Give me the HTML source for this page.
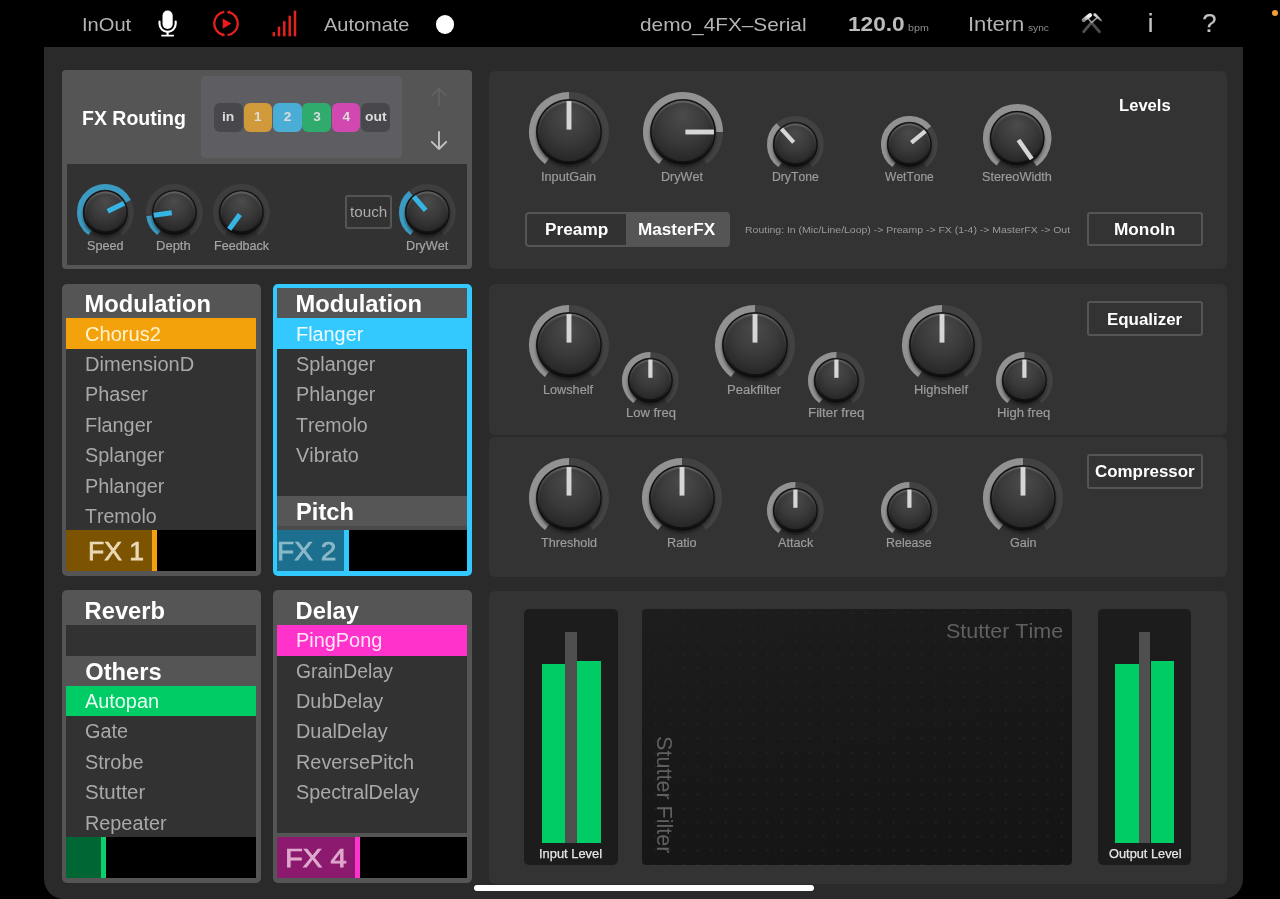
<!DOCTYPE html><html lang="en"><head><meta charset="utf-8"><title>4FX Serial</title><style>
*{margin:0;padding:0;box-sizing:border-box}
html,body{width:1280px;height:899px;overflow:hidden;background:#000}
body{position:relative;font-family:"Liberation Sans",sans-serif;font-kerning:none;-webkit-font-smoothing:antialiased}
.t{position:absolute;white-space:nowrap}
#w{position:absolute;left:0;top:0;width:1280px;height:899px;will-change:transform}
.b{position:absolute}
.k{position:absolute;overflow:visible}
svg{display:block}
</style></head><body>
<svg width="0" height="0" style="position:absolute"><defs>
<linearGradient id="kg1" x1="0" y1="0" x2="0" y2="1"><stop offset="0" stop-color="#606060"/><stop offset="0.2" stop-color="#484848"/><stop offset="0.65" stop-color="#262626"/><stop offset="1" stop-color="#0e0e0e"/></linearGradient>
<radialGradient id="kg2" cx="0.5" cy="0.36" r="0.68" fx="0.5" fy="0.2"><stop offset="0" stop-color="#4b4b4b"/><stop offset="0.55" stop-color="#3a3a3a"/><stop offset="0.85" stop-color="#2c2c2c"/><stop offset="1" stop-color="#232323"/></radialGradient>
<filter id="ks" x="-30%" y="-30%" width="160%" height="160%"><feGaussianBlur stdDeviation="1.6"/></filter>
</defs></svg>
<div id="w">
<div class="b" style="left:44px;top:47px;width:1199.00px;height:852.00px;background:#2a2a2a;border-radius:0 0 20px 20px"></div>
<div class="t" style="left:82.34px;top:14px;font-size:19px;line-height:21px;color:#b4b4b4;font-weight:400;transform-origin:0 0;transform:scaleX(1.0588);">InOut</div>
<div class="t" style="left:324.16px;top:14px;font-size:19px;line-height:21px;color:#b4b4b4;font-weight:400;transform-origin:0 0;transform:scaleX(1.0504);">Automate</div>
<div class="t" style="left:640.13px;top:14px;font-size:19px;line-height:21px;color:#b4b4b4;font-weight:400;transform-origin:0 0;transform:scaleX(1.0952);">demo_4FX–Serial</div>
<div class="t" style="left:848.17px;top:13px;font-size:20.3px;line-height:22px;color:#bcbcbc;font-weight:700;transform-origin:0 0;transform:scaleX(1.1173);">120.0</div>
<div class="t" style="left:908.11px;top:22px;font-size:9.6px;line-height:11px;color:#8e8e8e;font-weight:400;transform-origin:0 0;transform:scaleX(1.1134);">bpm</div>
<div class="t" style="left:968.27px;top:13px;font-size:20px;line-height:22px;color:#b4b4b4;font-weight:400;transform-origin:0 0;transform:scaleX(1.1021);">Intern</div>
<div class="t" style="left:1027.92px;top:22px;font-size:9.6px;line-height:11px;color:#8e8e8e;font-weight:400;transform-origin:0 0;transform:scaleX(1.0615);">sync</div>
<div class="t" style="left:1147.69px;top:9px;font-size:25.6px;line-height:28px;letter-spacing:0.000px;color:#c2c2c2;font-weight:400;-webkit-text-stroke:0.2px #c2c2c2;">i</div>
<div class="t" style="left:1202.15px;top:9px;font-size:25.6px;line-height:28px;letter-spacing:0.000px;color:#c2c2c2;font-weight:400;-webkit-text-stroke:0.2px #c2c2c2;">?</div>
<svg class="b" style="left:154px;top:8px" width="28" height="32" viewBox="0 0 28 32">
<rect x="8.5" y="2.6" width="10.2" height="18.4" rx="5.1" fill="#fff"/>
<path d="M5.5 13.6v2.2a8.1 8.1 0 0 0 16.2 0v-2.2" fill="none" stroke="#fff" stroke-width="2.1" stroke-linecap="round"/>
<path d="M13.6 23.8v3.6" stroke="#fff" stroke-width="2.1"/>
<path d="M7.9 27.65h11.4" stroke="#fff" stroke-width="1.6" stroke-linecap="round"/>
</svg>
<svg class="b" style="left:210px;top:8px" width="32" height="32" viewBox="0 0 32 32"><path d="M19.25 4.16A11.80 11.80 0 0 1 17.64 27.19" fill="none" stroke="#e5211d" stroke-width="2.3"/><path d="M12.75 26.84A11.80 11.80 0 0 1 14.36 3.81" fill="none" stroke="#e5211d" stroke-width="2.3"/><path d="M20.33 2.19L18.97 6.37L16.62 3.72z" fill="#e5211d"/><path d="M11.67 28.81L13.03 24.63L15.38 27.28z" fill="#e5211d"/><path d="M12.7 10.4v10.4l8.7-5.2z" fill="#f01a1a"/></svg>
<svg class="b" style="left:270px;top:8px" width="30" height="30" viewBox="0 0 30 30"><rect x="2.55" y="24.10" width="2.5" height="4.20" fill="#e5211d"/><rect x="7.75" y="18.60" width="2.5" height="9.70" fill="#e5211d"/><rect x="13.05" y="13.10" width="2.5" height="15.20" fill="#e5211d"/><rect x="18.45" y="7.70" width="2.5" height="20.60" fill="#e5211d"/><rect x="23.75" y="2.60" width="2.5" height="25.70" fill="#e5211d"/></svg>
<div class="b" style="left:435.8px;top:15.3px;width:18.6px;height:18.6px;border-radius:50%;background:#fff"></div>
<div class="b" style="left:1271.6px;top:9.7px;width:6.4px;height:6.4px;border-radius:50%;background:#f0a030"></div>
<svg class="b" style="left:1076px;top:8px" width="32" height="30" viewBox="0 0 32 30">
<defs><linearGradient id="hh" x1="0" y1="1" x2="1" y2="0"><stop offset="0" stop-color="#8a8a8a"/><stop offset="0.6" stop-color="#e9e9e9"/><stop offset="1" stop-color="#f4f4f4"/></linearGradient>
<linearGradient id="hh2" x1="0" y1="0" x2="1" y2="1"><stop offset="0" stop-color="#f0f0f0"/><stop offset="0.55" stop-color="#b8b8b8"/><stop offset="1" stop-color="#555"/></linearGradient></defs>
<path d="M15.6 14.8L23.5 23.7" stroke="#4b4b4b" stroke-width="2.8" stroke-linecap="round"/>
<path d="M15.2 14.8L7.7 23.7" stroke="#525252" stroke-width="2.8" stroke-linecap="round"/>
<path d="M10.7 8.7L15.6 14.6" stroke="#9c9c9c" stroke-width="1.6"/>
<path d="M21.2 9.5L15.3 14.8" stroke="#a4a4a4" stroke-width="1.6"/>
<path d="M7.7 12L14.1 7.2" stroke="url(#hh)" stroke-width="4" stroke-linecap="round"/>
<path d="M17.3 5.7l2.2-0.5 6 6.2 0.9 2.3-2.1-0.8-6.6-5.4z" fill="url(#hh2)"/>
</svg>
<div class="b" style="left:474px;top:884.6px;width:340.00px;height:6.00px;background:#fff;border-radius:3px"></div>
<div class="b" style="left:62px;top:70px;width:409.50px;height:199.30px;background:#555555;border-radius:4px"></div>
<div class="b" style="left:66.7px;top:164px;width:400.30px;height:100.50px;background:#323232;"></div>
<div class="b" style="left:201.4px;top:76px;width:201.00px;height:82.00px;background:#5e5e62;border-radius:4px"></div>
<div class="t" style="left:81.60px;top:107px;font-size:19.8px;line-height:22px;color:#ffffff;font-weight:700;transform-origin:0 0;transform:scaleX(0.9852);">FX Routing</div>
<div class="b" style="left:214.2px;top:102.6px;width:28.50px;height:29.20px;background:#47474c;border-radius:6px"></div>
<div class="t" style="left:222.36px;top:109px;font-size:13.6px;line-height:15px;color:#dcdcdc;font-weight:700;transform-origin:0 0;transform:scaleX(1.0243);">in</div>
<div class="b" style="left:243.62px;top:102.6px;width:28.50px;height:29.20px;background:#d09a3a;border-radius:6px"></div>
<div class="t" style="left:254.00px;top:109px;font-size:13.6px;line-height:15px;letter-spacing:0.000px;color:#dcdcdc;font-weight:700;">1</div>
<div class="b" style="left:273.04px;top:102.6px;width:28.50px;height:29.20px;background:#4aadd6;border-radius:6px"></div>
<div class="t" style="left:283.69px;top:109px;font-size:13.6px;line-height:15px;letter-spacing:0.000px;color:#dcdcdc;font-weight:700;">2</div>
<div class="b" style="left:302.46px;top:102.6px;width:28.50px;height:29.20px;background:#2fab6e;border-radius:6px"></div>
<div class="t" style="left:313.17px;top:109px;font-size:13.6px;line-height:15px;letter-spacing:0.000px;color:#dcdcdc;font-weight:700;">3</div>
<div class="b" style="left:331.88px;top:102.6px;width:28.50px;height:29.20px;background:#d048b0;border-radius:6px"></div>
<div class="t" style="left:342.43px;top:109px;font-size:13.6px;line-height:15px;letter-spacing:0.000px;color:#dcdcdc;font-weight:700;">4</div>
<div class="b" style="left:361.3px;top:102.6px;width:28.50px;height:29.20px;background:#47474c;border-radius:6px"></div>
<div class="t" style="left:364.68px;top:109px;font-size:13.6px;line-height:15px;color:#dcdcdc;font-weight:700;transform-origin:0 0;transform:scaleX(1.0245);">out</div>
<svg class="b" style="left:428px;top:84px" width="22" height="70" viewBox="0 0 22 70">
<g fill="none" stroke="#646464" stroke-width="1.7" stroke-linecap="round" stroke-linejoin="round"><path d="M11 21.5V4.5M4 11.5l7-7 7 7"/></g>
<g fill="none" stroke="#c2c2c2" stroke-width="1.9" stroke-linecap="round" stroke-linejoin="round"><path d="M11 48V65M3.8 57.8l7.2 7.2 7.2-7.2"/></g>
</svg>
<svg class="k" style="left:73.40px;top:179.90px" width="64.80" height="64.80" viewBox="0 0 64.80 64.80"><path d="M17.05 52.77A25.50 25.50 0 1 1 47.75 52.77" fill="none" stroke="#3e3e3e" stroke-width="5.8"/><path d="M17.05 52.77A25.50 25.50 0 1 1 55.32 21.22" fill="none" stroke="#3c9bc2" stroke-width="5.8"/><ellipse cx="32.4" cy="34.90" rx="22.00" ry="22.30" fill="#151515" opacity="0.85" filter="url(#ks)"/><circle cx="32.4" cy="32.4" r="22.20" fill="#0d0d0d"/><circle cx="32.4" cy="32.4" r="21.10" fill="url(#kg1)"/><circle cx="32.4" cy="32.4" r="18.90" fill="url(#kg2)"/><rect x="29.85" y="11.60" width="5.1000000000000005" height="18.20" fill="#36b4e4" transform="rotate(64 32.4 32.4)"/></svg>
<div class="t" style="left:87.44px;top:239px;font-size:12px;line-height:14px;color:#a6a6a6;font-weight:400;transform-origin:0 0;transform:scaleX(1.0539);-webkit-text-stroke:0.18px #a6a6a6;">Speed</div>
<svg class="k" style="left:141.50px;top:179.90px" width="64.80" height="64.80" viewBox="0 0 64.80 64.80"><path d="M17.05 52.77A25.50 25.50 0 1 1 47.75 52.77" fill="none" stroke="#3e3e3e" stroke-width="5.8"/><path d="M17.05 52.77A25.50 25.50 0 0 1 7.15 35.95" fill="none" stroke="#3c9bc2" stroke-width="5.8"/><ellipse cx="32.4" cy="34.90" rx="22.00" ry="22.30" fill="#151515" opacity="0.85" filter="url(#ks)"/><circle cx="32.4" cy="32.4" r="22.20" fill="#0d0d0d"/><circle cx="32.4" cy="32.4" r="21.10" fill="url(#kg1)"/><circle cx="32.4" cy="32.4" r="18.90" fill="url(#kg2)"/><rect x="29.85" y="11.60" width="5.1000000000000005" height="18.20" fill="#36b4e4" transform="rotate(-98 32.4 32.4)"/></svg>
<div class="t" style="left:156.13px;top:239px;font-size:12px;line-height:14px;color:#a6a6a6;font-weight:400;transform-origin:0 0;transform:scaleX(1.0840);-webkit-text-stroke:0.18px #a6a6a6;">Depth</div>
<svg class="k" style="left:209.10px;top:179.90px" width="64.80" height="64.80" viewBox="0 0 64.80 64.80"><path d="M17.05 52.77A25.50 25.50 0 1 1 47.75 52.77" fill="none" stroke="#3e3e3e" stroke-width="5.8"/><ellipse cx="32.4" cy="34.90" rx="22.00" ry="22.30" fill="#151515" opacity="0.85" filter="url(#ks)"/><circle cx="32.4" cy="32.4" r="22.20" fill="#0d0d0d"/><circle cx="32.4" cy="32.4" r="21.10" fill="url(#kg1)"/><circle cx="32.4" cy="32.4" r="18.90" fill="url(#kg2)"/><rect x="29.85" y="11.60" width="5.1000000000000005" height="18.20" fill="#36b4e4" transform="rotate(-144 32.4 32.4)"/></svg>
<div class="t" style="left:213.51px;top:239px;font-size:12px;line-height:14px;color:#a6a6a6;font-weight:400;transform-origin:0 0;transform:scaleX(1.0460);-webkit-text-stroke:0.18px #a6a6a6;">Feedback</div>
<svg class="k" style="left:395.00px;top:179.90px" width="64.80" height="64.80" viewBox="0 0 64.80 64.80"><path d="M17.05 52.77A25.50 25.50 0 1 1 47.75 52.77" fill="none" stroke="#3e3e3e" stroke-width="5.8"/><path d="M17.05 52.77A25.50 25.50 0 0 1 15.67 13.15" fill="none" stroke="#3c9bc2" stroke-width="5.8"/><ellipse cx="32.4" cy="34.90" rx="22.00" ry="22.30" fill="#151515" opacity="0.85" filter="url(#ks)"/><circle cx="32.4" cy="32.4" r="22.20" fill="#0d0d0d"/><circle cx="32.4" cy="32.4" r="21.10" fill="url(#kg1)"/><circle cx="32.4" cy="32.4" r="18.90" fill="url(#kg2)"/><rect x="29.85" y="11.60" width="5.1000000000000005" height="18.20" fill="#36b4e4" transform="rotate(-41 32.4 32.4)"/></svg>
<div class="t" style="left:405.82px;top:239px;font-size:12px;line-height:14px;color:#a6a6a6;font-weight:400;transform-origin:0 0;transform:scaleX(1.0552);-webkit-text-stroke:0.18px #a6a6a6;">DryWet</div>
<div class="b" style="left:345.4px;top:194.7px;width:46.6px;height:34.7px;border:2px solid #555;border-radius:3px"></div>
<div class="t" style="left:349.97px;top:203px;font-size:15px;line-height:17px;color:#ababab;font-weight:400;transform-origin:0 0;transform:scaleX(1.0171);">touch</div>
<div class="b" style="left:62px;top:283.6px;width:199.00px;height:292.20px;background:#555555;border-radius:5px"></div>
<div class="b" style="left:66.3px;top:288.1px;width:189.90px;height:242.30px;background:#323232;"></div>
<div class="b" style="left:66.3px;top:288.1px;width:189.90px;height:30.35px;background:#555555;"></div>
<div class="t" style="left:84.61px;top:291px;font-size:23.7px;line-height:26px;color:#ffffff;font-weight:700;transform-origin:0 0;transform:scaleX(1.0000);">Modulation</div>
<div class="b" style="left:66.3px;top:318.45000000000005px;width:189.90px;height:30.65px;background:#f4a20b;"></div>
<div class="t" style="left:84.97px;top:323px;font-size:19.5px;line-height:22px;color:#fff3cf;font-weight:400;transform-origin:0 0;transform:scaleX(1.0302);">Chorus2</div>
<div class="t" style="left:84.95px;top:353px;font-size:19.5px;line-height:22px;color:#a9a9a9;font-weight:400;transform-origin:0 0;transform:scaleX(1.0283);">DimensionD</div>
<div class="t" style="left:84.97px;top:383px;font-size:19.5px;line-height:22px;color:#a9a9a9;font-weight:400;transform-origin:0 0;transform:scaleX(1.0182);">Phaser</div>
<div class="t" style="left:84.97px;top:414px;font-size:19.5px;line-height:22px;color:#a9a9a9;font-weight:400;transform-origin:0 0;transform:scaleX(1.0182);">Flanger</div>
<div class="t" style="left:84.98px;top:444px;font-size:19.5px;line-height:22px;color:#a9a9a9;font-weight:400;transform-origin:0 0;transform:scaleX(1.0182);">Splanger</div>
<div class="t" style="left:84.98px;top:475px;font-size:19.5px;line-height:22px;color:#a9a9a9;font-weight:400;transform-origin:0 0;transform:scaleX(1.0153);">Phlanger</div>
<div class="t" style="left:85.00px;top:505px;font-size:19.5px;line-height:22px;color:#a9a9a9;font-weight:400;transform-origin:0 0;transform:scaleX(1.0020);">Tremolo</div>
<div class="b" style="left:66.3px;top:530.4px;width:189.90px;height:40.70px;background:#000;"></div>
<div class="b" style="left:66.3px;top:530.4px;width:85.80px;height:40.70px;background:#7b5301;"></div>
<div class="b" style="left:152.1px;top:530.4px;width:4.80px;height:40.70px;background:#f4a20b;"></div>
<div class="t" style="left:87.82px;top:536px;font-size:26.6px;line-height:30px;color:#ead9b6;font-weight:400;transform-origin:0 0;transform:scaleX(0.9982);-webkit-text-stroke:0.75px #ead9b6;">FX 1</div>
<div class="b" style="left:273px;top:283.6px;width:199.00px;height:292.30px;background:#33c9ff;border-radius:5px"></div>
<div class="b" style="left:277.4px;top:288.1px;width:189.70px;height:242.30px;background:#323232;"></div>
<div class="b" style="left:277.4px;top:288.1px;width:189.70px;height:30.35px;background:#555555;"></div>
<div class="t" style="left:295.61px;top:291px;font-size:23.7px;line-height:26px;color:#ffffff;font-weight:700;transform-origin:0 0;transform:scaleX(1.0000);">Modulation</div>
<div class="b" style="left:277.4px;top:318.45000000000005px;width:189.70px;height:30.65px;background:#33c9ff;"></div>
<div class="t" style="left:295.97px;top:323px;font-size:19.5px;line-height:22px;color:#eefaff;font-weight:400;transform-origin:0 0;transform:scaleX(1.0182);">Flanger</div>
<div class="t" style="left:295.98px;top:353px;font-size:19.5px;line-height:22px;color:#a9a9a9;font-weight:400;transform-origin:0 0;transform:scaleX(1.0182);">Splanger</div>
<div class="t" style="left:295.98px;top:383px;font-size:19.5px;line-height:22px;color:#a9a9a9;font-weight:400;transform-origin:0 0;transform:scaleX(1.0153);">Phlanger</div>
<div class="t" style="left:296.00px;top:414px;font-size:19.5px;line-height:22px;color:#a9a9a9;font-weight:400;transform-origin:0 0;transform:scaleX(1.0020);">Tremolo</div>
<div class="t" style="left:296.00px;top:444px;font-size:19.5px;line-height:22px;color:#a9a9a9;font-weight:400;transform-origin:0 0;transform:scaleX(1.0182);">Vibrato</div>
<div class="b" style="left:277.4px;top:530.4px;width:189.70px;height:40.70px;background:#000;"></div>
<div class="b" style="left:277.4px;top:530.4px;width:66.60px;height:40.70px;background:#1c6f8e;"></div>
<div class="b" style="left:344px;top:530.4px;width:5.20px;height:40.70px;background:#33c9ff;"></div>
<div class="b" style="left:277.4px;top:496.1px;width:189.70px;height:29.90px;background:#565656;"></div>
<div class="b" style="left:277.4px;top:526px;width:189.70px;height:4.40px;background:#4b4b4b;"></div>
<div class="t" style="left:296.01px;top:499px;font-size:23.7px;line-height:26px;color:#fff;font-weight:700;transform-origin:0 0;transform:scaleX(1.0000);">Pitch</div>
<div class="b" style="left:277.4px;top:530.4px;width:70px;height:40.7px;overflow:hidden"><div class="t" style="left:-0.41px;top:6px;font-size:26.6px;line-height:30px;color:#8bb9c9;font-weight:400;transform-origin:0 0;transform:scaleX(1.0578);-webkit-text-stroke:0.75px #8bb9c9;">FX 2</div></div>
<div class="b" style="left:62px;top:590.3px;width:199.00px;height:292.40px;background:#555555;border-radius:5px"></div>
<div class="b" style="left:66.3px;top:594.8px;width:189.90px;height:242.30px;background:#323232;"></div>
<div class="b" style="left:66.3px;top:594.8px;width:189.90px;height:30.35px;background:#555555;"></div>
<div class="t" style="left:84.61px;top:598px;font-size:23.7px;line-height:26px;color:#ffffff;font-weight:700;transform-origin:0 0;transform:scaleX(1.0000);">Reverb</div>
<div class="b" style="left:66.3px;top:655.5px;width:189.90px;height:30.35px;background:#555555;"></div>
<div class="t" style="left:85.23px;top:659px;font-size:23.7px;line-height:26px;color:#ffffff;font-weight:700;transform-origin:0 0;transform:scaleX(1.0000);">Others</div>
<div class="b" style="left:66.3px;top:685.8499999999999px;width:189.90px;height:30.65px;background:#00cc66;"></div>
<div class="t" style="left:85.00px;top:690px;font-size:19.5px;line-height:22px;color:#e6fff0;font-weight:400;transform-origin:0 0;transform:scaleX(1.0182);">Autopan</div>
<div class="t" style="left:84.98px;top:720px;font-size:19.5px;line-height:22px;color:#a9a9a9;font-weight:400;transform-origin:0 0;transform:scaleX(1.0182);">Gate</div>
<div class="t" style="left:84.98px;top:751px;font-size:19.5px;line-height:22px;color:#a9a9a9;font-weight:400;transform-origin:0 0;transform:scaleX(1.0182);">Strobe</div>
<div class="t" style="left:84.96px;top:781px;font-size:19.5px;line-height:22px;color:#a9a9a9;font-weight:400;transform-origin:0 0;transform:scaleX(1.0492);">Stutter</div>
<div class="t" style="left:84.97px;top:812px;font-size:19.5px;line-height:22px;color:#a9a9a9;font-weight:400;transform-origin:0 0;transform:scaleX(1.0167);">Repeater</div>
<div class="b" style="left:66.3px;top:837.1px;width:189.90px;height:40.70px;background:#000;"></div>
<div class="b" style="left:66.3px;top:837.1px;width:35.10px;height:40.70px;background:#006634;"></div>
<div class="b" style="left:101.4px;top:837.1px;width:4.80px;height:40.70px;background:#0dd06a;"></div>
<div class="b" style="left:273px;top:590.3px;width:199.00px;height:292.40px;background:#555555;border-radius:5px"></div>
<div class="b" style="left:277.2px;top:594.8px;width:189.90px;height:237.90px;background:#323232;"></div>
<div class="b" style="left:277.2px;top:594.8px;width:189.90px;height:30.35px;background:#555555;"></div>
<div class="t" style="left:295.61px;top:598px;font-size:23.7px;line-height:26px;color:#ffffff;font-weight:700;transform-origin:0 0;transform:scaleX(1.0000);">Delay</div>
<div class="b" style="left:277.2px;top:625.15px;width:189.90px;height:30.65px;background:#ff33cc;"></div>
<div class="t" style="left:295.97px;top:629px;font-size:19.5px;line-height:22px;color:#ffe6f8;font-weight:400;transform-origin:0 0;transform:scaleX(1.0206);">PingPong</div>
<div class="t" style="left:296.01px;top:660px;font-size:19.5px;line-height:22px;color:#a9a9a9;font-weight:400;transform-origin:0 0;transform:scaleX(0.9925);">GrainDelay</div>
<div class="t" style="left:295.97px;top:690px;font-size:19.5px;line-height:22px;color:#a9a9a9;font-weight:400;transform-origin:0 0;transform:scaleX(1.0182);">DubDelay</div>
<div class="t" style="left:295.97px;top:720px;font-size:19.5px;line-height:22px;color:#a9a9a9;font-weight:400;transform-origin:0 0;transform:scaleX(1.0182);">DualDelay</div>
<div class="t" style="left:295.97px;top:751px;font-size:19.5px;line-height:22px;color:#a9a9a9;font-weight:400;transform-origin:0 0;transform:scaleX(1.0182);">ReversePitch</div>
<div class="t" style="left:295.99px;top:781px;font-size:19.5px;line-height:22px;color:#a9a9a9;font-weight:400;transform-origin:0 0;transform:scaleX(1.0144);">SpectralDelay</div>
<div class="b" style="left:277.2px;top:837.1px;width:189.90px;height:40.70px;background:#000;"></div>
<div class="b" style="left:277.2px;top:837.1px;width:77.50px;height:40.70px;background:#8b1a6e;"></div>
<div class="b" style="left:354.7px;top:837.1px;width:5.20px;height:40.70px;background:#ff33cc;"></div>
<div class="t" style="left:285.41px;top:843px;font-size:26.6px;line-height:30px;color:#dfa9cd;font-weight:400;transform-origin:0 0;transform:scaleX(1.0975);-webkit-text-stroke:0.75px #dfa9cd;">FX 4</div>
<div class="b" style="left:489.3px;top:70.5px;width:737.70px;height:198.90px;background:#333333;border-radius:6px"></div>
<div class="b" style="left:489.3px;top:283.7px;width:737.70px;height:151.10px;background:#333333;border-radius:6px"></div>
<div class="b" style="left:489.3px;top:437px;width:737.70px;height:139.80px;background:#333333;border-radius:6px"></div>
<div class="b" style="left:489.3px;top:591.2px;width:737.70px;height:292.40px;background:#333333;border-radius:6px"></div>
<svg class="k" style="left:524.80px;top:88.20px" width="88.00" height="88.00" viewBox="0 0 88.00 88.00"><path d="M22.03 73.15A36.50 36.50 0 1 1 65.97 73.15" fill="none" stroke="#424242" stroke-width="7.0"/><path d="M22.03 73.15A36.50 36.50 0 0 1 44.00 7.50" fill="none" stroke="#929292" stroke-width="7.0"/><ellipse cx="44.0" cy="46.50" rx="32.40" ry="32.70" fill="#151515" opacity="0.85" filter="url(#ks)"/><circle cx="44.0" cy="44.0" r="32.60" fill="#0d0d0d"/><circle cx="44.0" cy="44.0" r="31.50" fill="url(#kg1)"/><circle cx="44.0" cy="44.0" r="29.30" fill="url(#kg2)"/><rect x="41.55" y="13.10" width="4.9" height="28.50" fill="#d6d6d6" transform="rotate(0 44.0 44.0)"/></svg>
<div class="t" style="left:540.83px;top:170px;font-size:12px;line-height:14px;color:#9c9c9c;font-weight:400;transform-origin:0 0;transform:scaleX(1.0606);-webkit-text-stroke:0.18px #9c9c9c;">InputGain</div>
<svg class="k" style="left:638.60px;top:88.20px" width="88.00" height="88.00" viewBox="0 0 88.00 88.00"><path d="M22.03 73.15A36.50 36.50 0 1 1 65.97 73.15" fill="none" stroke="#424242" stroke-width="7.0"/><path d="M22.03 73.15A36.50 36.50 0 1 1 80.50 44.00" fill="none" stroke="#929292" stroke-width="7.0"/><ellipse cx="44.0" cy="46.50" rx="32.40" ry="32.70" fill="#151515" opacity="0.85" filter="url(#ks)"/><circle cx="44.0" cy="44.0" r="32.60" fill="#0d0d0d"/><circle cx="44.0" cy="44.0" r="31.50" fill="url(#kg1)"/><circle cx="44.0" cy="44.0" r="29.30" fill="url(#kg2)"/><rect x="41.55" y="13.10" width="4.9" height="28.50" fill="#d6d6d6" transform="rotate(90 44.0 44.0)"/></svg>
<div class="t" style="left:660.96px;top:170px;font-size:12px;line-height:14px;color:#9c9c9c;font-weight:400;transform-origin:0 0;transform:scaleX(1.0488);-webkit-text-stroke:0.18px #9c9c9c;">DryWet</div>
<svg class="k" style="left:763.40px;top:111.90px" width="64.80" height="64.80" viewBox="0 0 64.80 64.80"><path d="M17.05 52.77A25.50 25.50 0 1 1 47.75 52.77" fill="none" stroke="#424242" stroke-width="5.8"/><path d="M17.05 52.77A25.50 25.50 0 0 1 15.34 13.45" fill="none" stroke="#929292" stroke-width="5.8"/><ellipse cx="32.4" cy="34.90" rx="22.00" ry="22.30" fill="#151515" opacity="0.85" filter="url(#ks)"/><circle cx="32.4" cy="32.4" r="22.20" fill="#0d0d0d"/><circle cx="32.4" cy="32.4" r="21.10" fill="url(#kg1)"/><circle cx="32.4" cy="32.4" r="18.90" fill="url(#kg2)"/><rect x="30.30" y="11.60" width="4.2" height="18.20" fill="#d6d6d6" transform="rotate(-42 32.4 32.4)"/></svg>
<div class="t" style="left:771.99px;top:170px;font-size:12px;line-height:14px;color:#9c9c9c;font-weight:400;transform-origin:0 0;transform:scaleX(1.0162);-webkit-text-stroke:0.18px #9c9c9c;">DryTone</div>
<svg class="k" style="left:876.90px;top:111.90px" width="64.80" height="64.80" viewBox="0 0 64.80 64.80"><path d="M17.05 52.77A25.50 25.50 0 1 1 47.75 52.77" fill="none" stroke="#424242" stroke-width="5.8"/><path d="M17.05 52.77A25.50 25.50 0 1 1 51.93 16.01" fill="none" stroke="#929292" stroke-width="5.8"/><ellipse cx="32.4" cy="34.90" rx="22.00" ry="22.30" fill="#151515" opacity="0.85" filter="url(#ks)"/><circle cx="32.4" cy="32.4" r="22.20" fill="#0d0d0d"/><circle cx="32.4" cy="32.4" r="21.10" fill="url(#kg1)"/><circle cx="32.4" cy="32.4" r="18.90" fill="url(#kg2)"/><rect x="30.30" y="11.60" width="4.2" height="18.20" fill="#d6d6d6" transform="rotate(50 32.4 32.4)"/></svg>
<div class="t" style="left:885.10px;top:170px;font-size:12px;line-height:14px;color:#9c9c9c;font-weight:400;transform-origin:0 0;transform:scaleX(1.0000);-webkit-text-stroke:0.18px #9c9c9c;">WetTone</div>
<svg class="k" style="left:979.10px;top:99.80px" width="76.40" height="76.40" viewBox="0 0 76.40 76.40"><path d="M19.66 62.80A30.80 30.80 0 1 1 56.74 62.80" fill="none" stroke="#424242" stroke-width="6.8"/><path d="M19.66 62.80A30.80 30.80 0 1 1 55.87 63.43" fill="none" stroke="#929292" stroke-width="6.8"/><ellipse cx="38.2" cy="40.70" rx="26.90" ry="27.20" fill="#151515" opacity="0.85" filter="url(#ks)"/><circle cx="38.2" cy="38.2" r="27.10" fill="#0d0d0d"/><circle cx="38.2" cy="38.2" r="26.00" fill="url(#kg1)"/><circle cx="38.2" cy="38.2" r="23.80" fill="url(#kg2)"/><rect x="35.90" y="12.80" width="4.6" height="23.20" fill="#d6d6d6" transform="rotate(145 38.2 38.2)"/></svg>
<div class="t" style="left:982.17px;top:170px;font-size:12px;line-height:14px;color:#9c9c9c;font-weight:400;transform-origin:0 0;transform:scaleX(1.0587);-webkit-text-stroke:0.18px #9c9c9c;">StereoWidth</div>
<div class="t" style="left:1118.69px;top:97px;font-size:16px;line-height:17px;color:#fff;font-weight:700;transform-origin:0 0;transform:scaleX(1.0377);">Levels</div>
<div class="b" style="left:524.6px;top:211.9px;width:205.8px;height:34.8px;border:2px solid #555;border-radius:4px;background:linear-gradient(90deg,#323232 0,#323232 98.7px,#555 98.7px)"></div>
<div class="t" style="left:544.95px;top:221px;font-size:16px;line-height:17px;color:#fff;font-weight:700;transform-origin:0 0;transform:scaleX(1.0778);">Preamp</div>
<div class="t" style="left:638.35px;top:221px;font-size:16px;line-height:17px;color:#fff;font-weight:700;transform-origin:0 0;transform:scaleX(1.0704);">MasterFX</div>
<div class="t" style="left:744.64px;top:224px;font-size:9.4px;line-height:11px;color:#9a9a9a;font-weight:400;transform-origin:0 0;transform:scaleX(1.1181);">Routing: In (Mic/Line/Loop) -&gt; Preamp -&gt; FX (1-4) -&gt; MasterFX -&gt; Out</div>
<div class="b" style="left:1086.6px;top:212.2px;width:116.4px;height:34.1px;border:2px solid #555;border-radius:3px"></div>
<div class="t" style="left:1113.95px;top:221px;font-size:16px;line-height:17px;color:#fff;font-weight:700;transform-origin:0 0;transform:scaleX(1.0766);">MonoIn</div>
<div class="b" style="left:1086.6px;top:301.3px;width:116.4px;height:34.3px;border:2px solid #555;border-radius:3px"></div>
<div class="t" style="left:1106.87px;top:311px;font-size:16px;line-height:17px;color:#fff;font-weight:700;transform-origin:0 0;transform:scaleX(1.0570);">Equalizer</div>
<div class="b" style="left:1086.6px;top:454.4px;width:116.4px;height:34.2px;border:2px solid #555;border-radius:3px"></div>
<div class="t" style="left:1094.61px;top:463px;font-size:16px;line-height:17px;color:#fff;font-weight:700;transform-origin:0 0;transform:scaleX(1.0573);">Compressor</div>
<svg class="k" style="left:525.00px;top:301.00px" width="88.00" height="88.00" viewBox="0 0 88.00 88.00"><path d="M22.03 73.15A36.50 36.50 0 1 1 65.97 73.15" fill="none" stroke="#424242" stroke-width="7.0"/><path d="M22.03 73.15A36.50 36.50 0 0 1 44.00 7.50" fill="none" stroke="#929292" stroke-width="7.0"/><ellipse cx="44.0" cy="46.50" rx="32.40" ry="32.70" fill="#151515" opacity="0.85" filter="url(#ks)"/><circle cx="44.0" cy="44.0" r="32.60" fill="#0d0d0d"/><circle cx="44.0" cy="44.0" r="31.50" fill="url(#kg1)"/><circle cx="44.0" cy="44.0" r="29.30" fill="url(#kg2)"/><rect x="41.55" y="13.10" width="4.9" height="28.50" fill="#d6d6d6" transform="rotate(0 44.0 44.0)"/></svg>
<div class="t" style="left:543.23px;top:383px;font-size:12px;line-height:14px;color:#9c9c9c;font-weight:400;transform-origin:0 0;transform:scaleX(1.0573);-webkit-text-stroke:0.18px #9c9c9c;">Lowshelf</div>
<svg class="k" style="left:618.40px;top:348.20px" width="64.80" height="64.80" viewBox="0 0 64.80 64.80"><path d="M17.05 52.77A25.50 25.50 0 1 1 47.75 52.77" fill="none" stroke="#424242" stroke-width="5.8"/><path d="M17.05 52.77A25.50 25.50 0 0 1 32.40 6.90" fill="none" stroke="#929292" stroke-width="5.8"/><ellipse cx="32.4" cy="34.90" rx="22.00" ry="22.30" fill="#151515" opacity="0.85" filter="url(#ks)"/><circle cx="32.4" cy="32.4" r="22.20" fill="#0d0d0d"/><circle cx="32.4" cy="32.4" r="21.10" fill="url(#kg1)"/><circle cx="32.4" cy="32.4" r="18.90" fill="url(#kg2)"/><rect x="30.30" y="11.60" width="4.2" height="18.20" fill="#d6d6d6" transform="rotate(0 32.4 32.4)"/></svg>
<div class="t" style="left:625.53px;top:406px;font-size:12px;line-height:14px;color:#9c9c9c;font-weight:400;transform-origin:0 0;transform:scaleX(1.0842);-webkit-text-stroke:0.18px #9c9c9c;">Low freq</div>
<svg class="k" style="left:711.00px;top:301.00px" width="88.00" height="88.00" viewBox="0 0 88.00 88.00"><path d="M22.03 73.15A36.50 36.50 0 1 1 65.97 73.15" fill="none" stroke="#424242" stroke-width="7.0"/><path d="M22.03 73.15A36.50 36.50 0 0 1 44.00 7.50" fill="none" stroke="#929292" stroke-width="7.0"/><ellipse cx="44.0" cy="46.50" rx="32.40" ry="32.70" fill="#151515" opacity="0.85" filter="url(#ks)"/><circle cx="44.0" cy="44.0" r="32.60" fill="#0d0d0d"/><circle cx="44.0" cy="44.0" r="31.50" fill="url(#kg1)"/><circle cx="44.0" cy="44.0" r="29.30" fill="url(#kg2)"/><rect x="41.55" y="13.10" width="4.9" height="28.50" fill="#d6d6d6" transform="rotate(0 44.0 44.0)"/></svg>
<div class="t" style="left:727.28px;top:383px;font-size:12px;line-height:14px;color:#9c9c9c;font-weight:400;transform-origin:0 0;transform:scaleX(1.0832);-webkit-text-stroke:0.18px #9c9c9c;">Peakfilter</div>
<svg class="k" style="left:804.40px;top:348.20px" width="64.80" height="64.80" viewBox="0 0 64.80 64.80"><path d="M17.05 52.77A25.50 25.50 0 1 1 47.75 52.77" fill="none" stroke="#424242" stroke-width="5.8"/><path d="M17.05 52.77A25.50 25.50 0 0 1 32.40 6.90" fill="none" stroke="#929292" stroke-width="5.8"/><ellipse cx="32.4" cy="34.90" rx="22.00" ry="22.30" fill="#151515" opacity="0.85" filter="url(#ks)"/><circle cx="32.4" cy="32.4" r="22.20" fill="#0d0d0d"/><circle cx="32.4" cy="32.4" r="21.10" fill="url(#kg1)"/><circle cx="32.4" cy="32.4" r="18.90" fill="url(#kg2)"/><rect x="30.30" y="11.60" width="4.2" height="18.20" fill="#d6d6d6" transform="rotate(0 32.4 32.4)"/></svg>
<div class="t" style="left:808.31px;top:406px;font-size:12px;line-height:14px;color:#9c9c9c;font-weight:400;transform-origin:0 0;transform:scaleX(1.1119);-webkit-text-stroke:0.18px #9c9c9c;">Filter freq</div>
<svg class="k" style="left:898.20px;top:301.00px" width="88.00" height="88.00" viewBox="0 0 88.00 88.00"><path d="M22.03 73.15A36.50 36.50 0 1 1 65.97 73.15" fill="none" stroke="#424242" stroke-width="7.0"/><path d="M22.03 73.15A36.50 36.50 0 0 1 44.00 7.50" fill="none" stroke="#929292" stroke-width="7.0"/><ellipse cx="44.0" cy="46.50" rx="32.40" ry="32.70" fill="#151515" opacity="0.85" filter="url(#ks)"/><circle cx="44.0" cy="44.0" r="32.60" fill="#0d0d0d"/><circle cx="44.0" cy="44.0" r="31.50" fill="url(#kg1)"/><circle cx="44.0" cy="44.0" r="29.30" fill="url(#kg2)"/><rect x="41.55" y="13.10" width="4.9" height="28.50" fill="#d6d6d6" transform="rotate(0 44.0 44.0)"/></svg>
<div class="t" style="left:914.44px;top:383px;font-size:12px;line-height:14px;color:#9c9c9c;font-weight:400;transform-origin:0 0;transform:scaleX(1.0803);-webkit-text-stroke:0.18px #9c9c9c;">Highshelf</div>
<svg class="k" style="left:991.50px;top:348.20px" width="64.80" height="64.80" viewBox="0 0 64.80 64.80"><path d="M17.05 52.77A25.50 25.50 0 1 1 47.75 52.77" fill="none" stroke="#424242" stroke-width="5.8"/><path d="M17.05 52.77A25.50 25.50 0 0 1 32.40 6.90" fill="none" stroke="#929292" stroke-width="5.8"/><ellipse cx="32.4" cy="34.90" rx="22.00" ry="22.30" fill="#151515" opacity="0.85" filter="url(#ks)"/><circle cx="32.4" cy="32.4" r="22.20" fill="#0d0d0d"/><circle cx="32.4" cy="32.4" r="21.10" fill="url(#kg1)"/><circle cx="32.4" cy="32.4" r="18.90" fill="url(#kg2)"/><rect x="30.30" y="11.60" width="4.2" height="18.20" fill="#d6d6d6" transform="rotate(0 32.4 32.4)"/></svg>
<div class="t" style="left:997.07px;top:406px;font-size:12px;line-height:14px;color:#9c9c9c;font-weight:400;transform-origin:0 0;transform:scaleX(1.0929);-webkit-text-stroke:0.18px #9c9c9c;">High freq</div>
<svg class="k" style="left:524.80px;top:454.20px" width="88.00" height="88.00" viewBox="0 0 88.00 88.00"><path d="M22.03 73.15A36.50 36.50 0 1 1 65.97 73.15" fill="none" stroke="#424242" stroke-width="7.0"/><path d="M22.03 73.15A36.50 36.50 0 0 1 44.00 7.50" fill="none" stroke="#929292" stroke-width="7.0"/><ellipse cx="44.0" cy="46.50" rx="32.40" ry="32.70" fill="#151515" opacity="0.85" filter="url(#ks)"/><circle cx="44.0" cy="44.0" r="32.60" fill="#0d0d0d"/><circle cx="44.0" cy="44.0" r="31.50" fill="url(#kg1)"/><circle cx="44.0" cy="44.0" r="29.30" fill="url(#kg2)"/><rect x="41.55" y="13.10" width="4.9" height="28.50" fill="#d6d6d6" transform="rotate(0 44.0 44.0)"/></svg>
<div class="t" style="left:540.82px;top:536px;font-size:12px;line-height:14px;color:#9c9c9c;font-weight:400;transform-origin:0 0;transform:scaleX(1.0513);-webkit-text-stroke:0.18px #9c9c9c;">Threshold</div>
<svg class="k" style="left:638.20px;top:454.20px" width="88.00" height="88.00" viewBox="0 0 88.00 88.00"><path d="M22.03 73.15A36.50 36.50 0 1 1 65.97 73.15" fill="none" stroke="#424242" stroke-width="7.0"/><path d="M22.03 73.15A36.50 36.50 0 0 1 44.00 7.50" fill="none" stroke="#929292" stroke-width="7.0"/><ellipse cx="44.0" cy="46.50" rx="32.40" ry="32.70" fill="#151515" opacity="0.85" filter="url(#ks)"/><circle cx="44.0" cy="44.0" r="32.60" fill="#0d0d0d"/><circle cx="44.0" cy="44.0" r="31.50" fill="url(#kg1)"/><circle cx="44.0" cy="44.0" r="29.30" fill="url(#kg2)"/><rect x="41.55" y="13.10" width="4.9" height="28.50" fill="#d6d6d6" transform="rotate(0 44.0 44.0)"/></svg>
<div class="t" style="left:666.94px;top:536px;font-size:12px;line-height:14px;color:#9c9c9c;font-weight:400;transform-origin:0 0;transform:scaleX(1.0573);-webkit-text-stroke:0.18px #9c9c9c;">Ratio</div>
<svg class="k" style="left:763.30px;top:477.80px" width="64.80" height="64.80" viewBox="0 0 64.80 64.80"><path d="M17.05 52.77A25.50 25.50 0 1 1 47.75 52.77" fill="none" stroke="#424242" stroke-width="5.8"/><path d="M17.05 52.77A25.50 25.50 0 0 1 32.40 6.90" fill="none" stroke="#929292" stroke-width="5.8"/><ellipse cx="32.4" cy="34.90" rx="22.00" ry="22.30" fill="#151515" opacity="0.85" filter="url(#ks)"/><circle cx="32.4" cy="32.4" r="22.20" fill="#0d0d0d"/><circle cx="32.4" cy="32.4" r="21.10" fill="url(#kg1)"/><circle cx="32.4" cy="32.4" r="18.90" fill="url(#kg2)"/><rect x="30.30" y="11.60" width="4.2" height="18.20" fill="#d6d6d6" transform="rotate(0 32.4 32.4)"/></svg>
<div class="t" style="left:777.96px;top:536px;font-size:12px;line-height:14px;color:#9c9c9c;font-weight:400;transform-origin:0 0;transform:scaleX(1.0570);-webkit-text-stroke:0.18px #9c9c9c;">Attack</div>
<svg class="k" style="left:876.70px;top:477.80px" width="64.80" height="64.80" viewBox="0 0 64.80 64.80"><path d="M17.05 52.77A25.50 25.50 0 1 1 47.75 52.77" fill="none" stroke="#424242" stroke-width="5.8"/><path d="M17.05 52.77A25.50 25.50 0 0 1 32.40 6.90" fill="none" stroke="#929292" stroke-width="5.8"/><ellipse cx="32.4" cy="34.90" rx="22.00" ry="22.30" fill="#151515" opacity="0.85" filter="url(#ks)"/><circle cx="32.4" cy="32.4" r="22.20" fill="#0d0d0d"/><circle cx="32.4" cy="32.4" r="21.10" fill="url(#kg1)"/><circle cx="32.4" cy="32.4" r="18.90" fill="url(#kg2)"/><rect x="30.30" y="11.60" width="4.2" height="18.20" fill="#d6d6d6" transform="rotate(0 32.4 32.4)"/></svg>
<div class="t" style="left:885.98px;top:536px;font-size:12px;line-height:14px;color:#9c9c9c;font-weight:400;transform-origin:0 0;transform:scaleX(1.0351);-webkit-text-stroke:0.18px #9c9c9c;">Release</div>
<svg class="k" style="left:978.90px;top:454.20px" width="88.00" height="88.00" viewBox="0 0 88.00 88.00"><path d="M22.03 73.15A36.50 36.50 0 1 1 65.97 73.15" fill="none" stroke="#424242" stroke-width="7.0"/><path d="M22.03 73.15A36.50 36.50 0 0 1 44.00 7.50" fill="none" stroke="#929292" stroke-width="7.0"/><ellipse cx="44.0" cy="46.50" rx="32.40" ry="32.70" fill="#151515" opacity="0.85" filter="url(#ks)"/><circle cx="44.0" cy="44.0" r="32.60" fill="#0d0d0d"/><circle cx="44.0" cy="44.0" r="31.50" fill="url(#kg1)"/><circle cx="44.0" cy="44.0" r="29.30" fill="url(#kg2)"/><rect x="41.55" y="13.10" width="4.9" height="28.50" fill="#d6d6d6" transform="rotate(0 44.0 44.0)"/></svg>
<div class="t" style="left:1009.62px;top:536px;font-size:12px;line-height:14px;color:#9c9c9c;font-weight:400;transform-origin:0 0;transform:scaleX(1.0476);-webkit-text-stroke:0.18px #9c9c9c;">Gain</div>
<div class="b" style="left:524.3px;top:608.5px;width:93.50px;height:256.70px;background:#1c1c1c;border-radius:5px"></div>
<div class="b" style="left:541.9px;top:664px;width:23.20px;height:178.80px;background:#00cc66;"></div>
<div class="b" style="left:577.1px;top:661px;width:23.70px;height:181.80px;background:#00cc66;"></div>
<div class="b" style="left:565.1px;top:632.1px;width:12.00px;height:210.70px;background:#4f4f50;"></div>
<div class="t" style="left:539.36px;top:847px;font-size:12.5px;line-height:14px;color:#e6e6e6;font-weight:400;transform-origin:0 0;transform:scaleX(1.0310);-webkit-text-stroke:0.25px #e6e6e6;">Input Level</div>
<div class="b" style="left:1098.2px;top:608.5px;width:93.00px;height:256.70px;background:#1c1c1c;border-radius:5px"></div>
<div class="b" style="left:1115.1px;top:664px;width:23.70px;height:178.80px;background:#00cc66;"></div>
<div class="b" style="left:1150.5px;top:661px;width:23.70px;height:181.80px;background:#00cc66;"></div>
<div class="b" style="left:1138.8px;top:632.1px;width:11.70px;height:210.70px;background:#4f4f50;"></div>
<div class="t" style="left:1108.54px;top:847px;font-size:12.5px;line-height:14px;color:#e6e6e6;font-weight:400;transform-origin:0 0;transform:scaleX(1.0237);-webkit-text-stroke:0.25px #e6e6e6;">Output Level</div>
<div class="b" style="left:642.3px;top:608.6px;width:430.2px;height:256.8px;border-radius:4px;background:radial-gradient(circle,#222 0,#222 0.7px,rgba(34,34,34,0) 1.3px) 6.7px -3.4px/14px 14px,linear-gradient(168deg,#1d1d1d 0%,#191919 38%,#141414 100%)"></div>
<div class="t" style="left:946.02px;top:619px;font-size:21px;line-height:23px;color:#616161;font-weight:400;transform-origin:0 0;transform:scaleX(1.0242);">Stutter Time</div>
<div class="t" style="left:677.31px;top:736.02px;font-size:22px;line-height:25px;color:#606060;transform-origin:0 0;transform:rotate(90deg) scaleX(0.9811)">Stutter Filter</div>
</div></body></html>
